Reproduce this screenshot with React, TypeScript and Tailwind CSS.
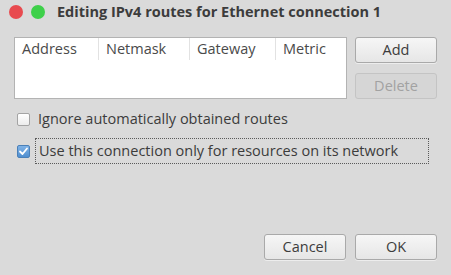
// Edit IPv4 routes dialog (Ubuntu / GTK look)

const FONT = { fontFamily: '"Open Sans", "Noto Sans", sans-serif' };

const COLUMNS = [
  { label: "Address", width: "w-[84px]" },
  { label: "Netmask", width: "w-[91px]" },
  { label: "Gateway", width: "w-[86px]" },
  { label: "Metric", width: "flex-1" },
];

function DialogButton({ label, disabled = false }: { label: string; disabled?: boolean }) {
  return (
    <button
      disabled={disabled}
      className={[
        "w-[82px] h-[26px] rounded-[3px] border text-[14.5px] leading-none",
        disabled
          ? "border-[#c4c4c4] bg-[#d6d6d6] text-[#a2a2a2]"
          : "border-[#a9a9a9] bg-gradient-to-b from-[#f6f6f6] to-[#e6e6e6] text-[#3c3c3c] shadow-[0_1px_0_rgba(255,255,255,0.5)]",
      ].join(" ")}
    >
      {label}
    </button>
  );
}

function Checkbox({ checked }: { checked: boolean }) {
  if (checked) {
    return (
      <span className="shrink-0 w-[13px] h-[13px] rounded-[2px] border border-[#4a80b8] bg-gradient-to-b from-[#7fb2e6] to-[#4f8fd0] flex items-center justify-center">
        <svg width="11" height="11" viewBox="0 0 11 11" fill="none" aria-hidden="true">
          <path d="M2 5.5L4.5 8L9 2.5" stroke="white" strokeWidth="1.8" strokeLinecap="round" strokeLinejoin="round" />
        </svg>
      </span>
    );
  }
  return <span className="shrink-0 w-[13px] h-[13px] rounded-[2px] border border-[#a4a4a4] bg-gradient-to-b from-[#ffffff] to-[#ececec]" />;
}

export default function App() {
  return (
    <div className="w-[451px] h-[275px] bg-[#dadada] flex flex-col text-[#3c3c3c]" style={FONT}>
      {/* Title bar */}
      <div className="h-[23px] flex items-center pl-[9px] gap-[8px]">
        <span className="w-[14px] h-[14px] rounded-full bg-[#e84a4f]" />
        <span className="w-[14px] h-[14px] rounded-full bg-[#3ed04a]" />
        <span className="ml-[4px] text-[14.5px] font-bold text-[#3c3c3c]">Editing IPv4 routes for Ethernet connection 1</span>
      </div>

      {/* Routes list + side buttons */}
      <div className="flex gap-[8px] pl-[14px] pr-[14px] mt-[14px]">
        <div className="w-[334px] h-[62px] bg-white border border-[#b3b3b3]">
          <div className="flex h-[22px] text-[14.5px] text-[#4a4a4a]">
            {COLUMNS.map((c, i) => (
              <div
                key={c.label}
                className={[c.width, "flex items-center pl-[7px]", i < COLUMNS.length - 1 ? "border-r border-[#e2e2e2]" : ""].join(" ")}
              >
                {c.label}
              </div>
            ))}
          </div>
        </div>
        <div className="flex flex-col gap-[10px]">
          <DialogButton label="Add" />
          <DialogButton label="Delete" disabled />
        </div>
      </div>

      {/* Options */}
      <div className="flex flex-col pl-[17px] pr-[22px] mt-[8px] text-[14.5px] text-[#3c3c3c]">
        <label className="flex items-center h-[24px] gap-[8px]">
          <Checkbox checked={false} />
          <span>Ignore automatically obtained routes</span>
        </label>
        <label className="flex items-center h-[26px] mt-[7px] gap-[5px]">
          <Checkbox checked />
          <span className="flex-1 h-full flex items-center pl-[3px] border border-dotted border-[#5a5a5a]">
            Use this connection only for resources on its network
          </span>
        </label>
      </div>

      {/* Footer buttons */}
      <div className="mt-auto mb-[15px] flex justify-end gap-[9px] pr-[14px]">
        <DialogButton label="Cancel" />
        <DialogButton label="OK" />
      </div>
    </div>
  );
}
